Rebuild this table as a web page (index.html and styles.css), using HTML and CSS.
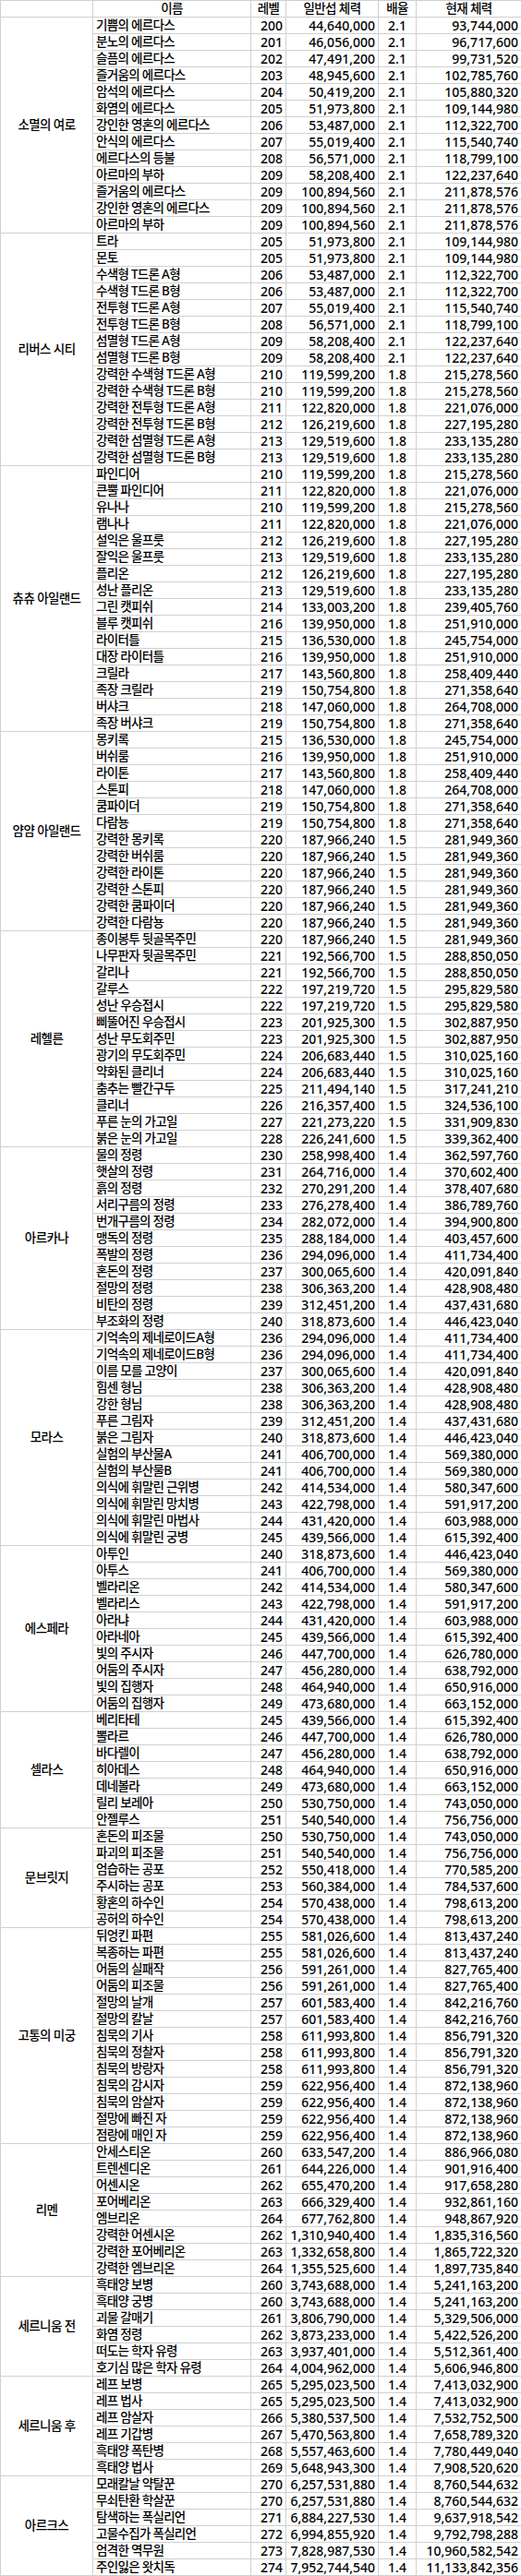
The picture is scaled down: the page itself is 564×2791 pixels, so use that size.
FILE: index.html
```html
<!DOCTYPE html>
<html lang="ko">
<head>
<meta charset="utf-8">
<title>몬스터 체력표</title>
<link rel="stylesheet" href="styles.css">
</head>
<body>
<table class="sheet">
<colgroup>
<col class="c-area"><col class="c-name"><col class="c-lv"><col class="c-hp"><col class="c-mul"><col class="c-cur">
</colgroup>
<thead>
<tr><th></th><th>이름</th><th>레벨</th><th>일반섭 체력</th><th>배율</th><th>현재 체력</th></tr>
</thead>
<tbody>
<tr><td class="area" rowspan="13">소멸의 여로</td><td class="n">기쁨의 에르다스</td><td class="r">200</td><td class="r">44,640,000</td><td class="c">2.1</td><td class="r">93,744,000</td></tr>
<tr><td class="n">분노의 에르다스</td><td class="r">201</td><td class="r">46,056,000</td><td class="c">2.1</td><td class="r">96,717,600</td></tr>
<tr><td class="n">슬픔의 에르다스</td><td class="r">202</td><td class="r">47,491,200</td><td class="c">2.1</td><td class="r">99,731,520</td></tr>
<tr><td class="n">즐거움의 에르다스</td><td class="r">203</td><td class="r">48,945,600</td><td class="c">2.1</td><td class="r">102,785,760</td></tr>
<tr><td class="n">암석의 에르다스</td><td class="r">204</td><td class="r">50,419,200</td><td class="c">2.1</td><td class="r">105,880,320</td></tr>
<tr><td class="n">화염의 에르다스</td><td class="r">205</td><td class="r">51,973,800</td><td class="c">2.1</td><td class="r">109,144,980</td></tr>
<tr><td class="n">강인한 영혼의 에르다스</td><td class="r">206</td><td class="r">53,487,000</td><td class="c">2.1</td><td class="r">112,322,700</td></tr>
<tr><td class="n">안식의 에르다스</td><td class="r">207</td><td class="r">55,019,400</td><td class="c">2.1</td><td class="r">115,540,740</td></tr>
<tr><td class="n">에르다스의 등불</td><td class="r">208</td><td class="r">56,571,000</td><td class="c">2.1</td><td class="r">118,799,100</td></tr>
<tr><td class="n">아르마의 부하</td><td class="r">209</td><td class="r">58,208,400</td><td class="c">2.1</td><td class="r">122,237,640</td></tr>
<tr><td class="n">즐거움의 에르다스</td><td class="r">209</td><td class="r">100,894,560</td><td class="c">2.1</td><td class="r">211,878,576</td></tr>
<tr><td class="n">강인한 영혼의 에르다스</td><td class="r">209</td><td class="r">100,894,560</td><td class="c">2.1</td><td class="r">211,878,576</td></tr>
<tr><td class="n">아르마의 부하</td><td class="r">209</td><td class="r">100,894,560</td><td class="c">2.1</td><td class="r">211,878,576</td></tr>

<tr><td class="area" rowspan="14">리버스 시티</td><td class="n">트라</td><td class="r">205</td><td class="r">51,973,800</td><td class="c">2.1</td><td class="r">109,144,980</td></tr>
<tr><td class="n">몬토</td><td class="r">205</td><td class="r">51,973,800</td><td class="c">2.1</td><td class="r">109,144,980</td></tr>
<tr><td class="n">수색형 T드론 A형</td><td class="r">206</td><td class="r">53,487,000</td><td class="c">2.1</td><td class="r">112,322,700</td></tr>
<tr><td class="n">수색형 T드론 B형</td><td class="r">206</td><td class="r">53,487,000</td><td class="c">2.1</td><td class="r">112,322,700</td></tr>
<tr><td class="n">전투형 T드론 A형</td><td class="r">207</td><td class="r">55,019,400</td><td class="c">2.1</td><td class="r">115,540,740</td></tr>
<tr><td class="n">전투형 T드론 B형</td><td class="r">208</td><td class="r">56,571,000</td><td class="c">2.1</td><td class="r">118,799,100</td></tr>
<tr><td class="n">섬멸형 T드론 A형</td><td class="r">209</td><td class="r">58,208,400</td><td class="c">2.1</td><td class="r">122,237,640</td></tr>
<tr><td class="n">섬멸형 T드론 B형</td><td class="r">209</td><td class="r">58,208,400</td><td class="c">2.1</td><td class="r">122,237,640</td></tr>
<tr><td class="n">강력한 수색형 T드론 A형</td><td class="r">210</td><td class="r">119,599,200</td><td class="c">1.8</td><td class="r">215,278,560</td></tr>
<tr><td class="n">강력한 수색형 T드론 B형</td><td class="r">210</td><td class="r">119,599,200</td><td class="c">1.8</td><td class="r">215,278,560</td></tr>
<tr><td class="n">강력한 전투형 T드론 A형</td><td class="r">211</td><td class="r">122,820,000</td><td class="c">1.8</td><td class="r">221,076,000</td></tr>
<tr><td class="n">강력한 전투형 T드론 B형</td><td class="r">212</td><td class="r">126,219,600</td><td class="c">1.8</td><td class="r">227,195,280</td></tr>
<tr><td class="n">강력한 섬멸형 T드론 A형</td><td class="r">213</td><td class="r">129,519,600</td><td class="c">1.8</td><td class="r">233,135,280</td></tr>
<tr><td class="n">강력한 섬멸형 T드론 B형</td><td class="r">213</td><td class="r">129,519,600</td><td class="c">1.8</td><td class="r">233,135,280</td></tr>

<tr><td class="area" rowspan="16">츄츄 아일랜드</td><td class="n">파인디어</td><td class="r">210</td><td class="r">119,599,200</td><td class="c">1.8</td><td class="r">215,278,560</td></tr>
<tr><td class="n">큰뿔 파인디어</td><td class="r">211</td><td class="r">122,820,000</td><td class="c">1.8</td><td class="r">221,076,000</td></tr>
<tr><td class="n">유나나</td><td class="r">210</td><td class="r">119,599,200</td><td class="c">1.8</td><td class="r">215,278,560</td></tr>
<tr><td class="n">램나나</td><td class="r">211</td><td class="r">122,820,000</td><td class="c">1.8</td><td class="r">221,076,000</td></tr>
<tr><td class="n">설익은 울프룻</td><td class="r">212</td><td class="r">126,219,600</td><td class="c">1.8</td><td class="r">227,195,280</td></tr>
<tr><td class="n">잘익은 울프룻</td><td class="r">213</td><td class="r">129,519,600</td><td class="c">1.8</td><td class="r">233,135,280</td></tr>
<tr><td class="n">플리온</td><td class="r">212</td><td class="r">126,219,600</td><td class="c">1.8</td><td class="r">227,195,280</td></tr>
<tr><td class="n">성난 플리온</td><td class="r">213</td><td class="r">129,519,600</td><td class="c">1.8</td><td class="r">233,135,280</td></tr>
<tr><td class="n">그린 캣피쉬</td><td class="r">214</td><td class="r">133,003,200</td><td class="c">1.8</td><td class="r">239,405,760</td></tr>
<tr><td class="n">블루 캣피쉬</td><td class="r">216</td><td class="r">139,950,000</td><td class="c">1.8</td><td class="r">251,910,000</td></tr>
<tr><td class="n">라이터틀</td><td class="r">215</td><td class="r">136,530,000</td><td class="c">1.8</td><td class="r">245,754,000</td></tr>
<tr><td class="n">대장 라이터틀</td><td class="r">216</td><td class="r">139,950,000</td><td class="c">1.8</td><td class="r">251,910,000</td></tr>
<tr><td class="n">크릴라</td><td class="r">217</td><td class="r">143,560,800</td><td class="c">1.8</td><td class="r">258,409,440</td></tr>
<tr><td class="n">족장 크릴라</td><td class="r">219</td><td class="r">150,754,800</td><td class="c">1.8</td><td class="r">271,358,640</td></tr>
<tr><td class="n">버샤크</td><td class="r">218</td><td class="r">147,060,000</td><td class="c">1.8</td><td class="r">264,708,000</td></tr>
<tr><td class="n">족장 버샤크</td><td class="r">219</td><td class="r">150,754,800</td><td class="c">1.8</td><td class="r">271,358,640</td></tr>

<tr><td class="area" rowspan="12">얌얌 아일랜드</td><td class="n">몽키록</td><td class="r">215</td><td class="r">136,530,000</td><td class="c">1.8</td><td class="r">245,754,000</td></tr>
<tr><td class="n">버쉬룸</td><td class="r">216</td><td class="r">139,950,000</td><td class="c">1.8</td><td class="r">251,910,000</td></tr>
<tr><td class="n">라이톤</td><td class="r">217</td><td class="r">143,560,800</td><td class="c">1.8</td><td class="r">258,409,440</td></tr>
<tr><td class="n">스톤피</td><td class="r">218</td><td class="r">147,060,000</td><td class="c">1.8</td><td class="r">264,708,000</td></tr>
<tr><td class="n">쿰파이더</td><td class="r">219</td><td class="r">150,754,800</td><td class="c">1.8</td><td class="r">271,358,640</td></tr>
<tr><td class="n">다람뇽</td><td class="r">219</td><td class="r">150,754,800</td><td class="c">1.8</td><td class="r">271,358,640</td></tr>
<tr><td class="n">강력한 몽키록</td><td class="r">220</td><td class="r">187,966,240</td><td class="c">1.5</td><td class="r">281,949,360</td></tr>
<tr><td class="n">강력한 버쉬룸</td><td class="r">220</td><td class="r">187,966,240</td><td class="c">1.5</td><td class="r">281,949,360</td></tr>
<tr><td class="n">강력한 라이톤</td><td class="r">220</td><td class="r">187,966,240</td><td class="c">1.5</td><td class="r">281,949,360</td></tr>
<tr><td class="n">강력한 스톤피</td><td class="r">220</td><td class="r">187,966,240</td><td class="c">1.5</td><td class="r">281,949,360</td></tr>
<tr><td class="n">강력한 쿰파이더</td><td class="r">220</td><td class="r">187,966,240</td><td class="c">1.5</td><td class="r">281,949,360</td></tr>
<tr><td class="n">강력한 다람뇽</td><td class="r">220</td><td class="r">187,966,240</td><td class="c">1.5</td><td class="r">281,949,360</td></tr>

<tr><td class="area" rowspan="13">레헬른</td><td class="n">종이봉투 뒷골목주민</td><td class="r">220</td><td class="r">187,966,240</td><td class="c">1.5</td><td class="r">281,949,360</td></tr>
<tr><td class="n">나무판자 뒷골목주민</td><td class="r">221</td><td class="r">192,566,700</td><td class="c">1.5</td><td class="r">288,850,050</td></tr>
<tr><td class="n">갈리나</td><td class="r">221</td><td class="r">192,566,700</td><td class="c">1.5</td><td class="r">288,850,050</td></tr>
<tr><td class="n">갈루스</td><td class="r">222</td><td class="r">197,219,720</td><td class="c">1.5</td><td class="r">295,829,580</td></tr>
<tr><td class="n">성난 우승접시</td><td class="r">222</td><td class="r">197,219,720</td><td class="c">1.5</td><td class="r">295,829,580</td></tr>
<tr><td class="n">삐뚤어진 우승접시</td><td class="r">223</td><td class="r">201,925,300</td><td class="c">1.5</td><td class="r">302,887,950</td></tr>
<tr><td class="n">성난 무도회주민</td><td class="r">223</td><td class="r">201,925,300</td><td class="c">1.5</td><td class="r">302,887,950</td></tr>
<tr><td class="n">광기의 무도회주민</td><td class="r">224</td><td class="r">206,683,440</td><td class="c">1.5</td><td class="r">310,025,160</td></tr>
<tr><td class="n">약화된 클리너</td><td class="r">224</td><td class="r">206,683,440</td><td class="c">1.5</td><td class="r">310,025,160</td></tr>
<tr><td class="n">춤추는 빨간구두</td><td class="r">225</td><td class="r">211,494,140</td><td class="c">1.5</td><td class="r">317,241,210</td></tr>
<tr><td class="n">클리너</td><td class="r">226</td><td class="r">216,357,400</td><td class="c">1.5</td><td class="r">324,536,100</td></tr>
<tr><td class="n">푸른 눈의 가고일</td><td class="r">227</td><td class="r">221,273,220</td><td class="c">1.5</td><td class="r">331,909,830</td></tr>
<tr><td class="n">붉은 눈의 가고일</td><td class="r">228</td><td class="r">226,241,600</td><td class="c">1.5</td><td class="r">339,362,400</td></tr>

<tr><td class="area" rowspan="11">아르카나</td><td class="n">물의 정령</td><td class="r">230</td><td class="r">258,998,400</td><td class="c">1.4</td><td class="r">362,597,760</td></tr>
<tr><td class="n">햇살의 정령</td><td class="r">231</td><td class="r">264,716,000</td><td class="c">1.4</td><td class="r">370,602,400</td></tr>
<tr><td class="n">흙의 정령</td><td class="r">232</td><td class="r">270,291,200</td><td class="c">1.4</td><td class="r">378,407,680</td></tr>
<tr><td class="n">서리구름의 정령</td><td class="r">233</td><td class="r">276,278,400</td><td class="c">1.4</td><td class="r">386,789,760</td></tr>
<tr><td class="n">번개구름의 정령</td><td class="r">234</td><td class="r">282,072,000</td><td class="c">1.4</td><td class="r">394,900,800</td></tr>
<tr><td class="n">맹독의 정령</td><td class="r">235</td><td class="r">288,184,000</td><td class="c">1.4</td><td class="r">403,457,600</td></tr>
<tr><td class="n">폭발의 정령</td><td class="r">236</td><td class="r">294,096,000</td><td class="c">1.4</td><td class="r">411,734,400</td></tr>
<tr><td class="n">혼돈의 정령</td><td class="r">237</td><td class="r">300,065,600</td><td class="c">1.4</td><td class="r">420,091,840</td></tr>
<tr><td class="n">절망의 정령</td><td class="r">238</td><td class="r">306,363,200</td><td class="c">1.4</td><td class="r">428,908,480</td></tr>
<tr><td class="n">비탄의 정령</td><td class="r">239</td><td class="r">312,451,200</td><td class="c">1.4</td><td class="r">437,431,680</td></tr>
<tr><td class="n">부조화의 정령</td><td class="r">240</td><td class="r">318,873,600</td><td class="c">1.4</td><td class="r">446,423,040</td></tr>

<tr><td class="area" rowspan="13">모라스</td><td class="n">기억속의 제네로이드A형</td><td class="r">236</td><td class="r">294,096,000</td><td class="c">1.4</td><td class="r">411,734,400</td></tr>
<tr><td class="n">기억속의 제네로이드B형</td><td class="r">236</td><td class="r">294,096,000</td><td class="c">1.4</td><td class="r">411,734,400</td></tr>
<tr><td class="n">이름 모를 고양이</td><td class="r">237</td><td class="r">300,065,600</td><td class="c">1.4</td><td class="r">420,091,840</td></tr>
<tr><td class="n">힘센 형님</td><td class="r">238</td><td class="r">306,363,200</td><td class="c">1.4</td><td class="r">428,908,480</td></tr>
<tr><td class="n">강한 형님</td><td class="r">238</td><td class="r">306,363,200</td><td class="c">1.4</td><td class="r">428,908,480</td></tr>
<tr><td class="n">푸른 그림자</td><td class="r">239</td><td class="r">312,451,200</td><td class="c">1.4</td><td class="r">437,431,680</td></tr>
<tr><td class="n">붉은 그림자</td><td class="r">240</td><td class="r">318,873,600</td><td class="c">1.4</td><td class="r">446,423,040</td></tr>
<tr><td class="n">실험의 부산물A</td><td class="r">241</td><td class="r">406,700,000</td><td class="c">1.4</td><td class="r">569,380,000</td></tr>
<tr><td class="n">실험의 부산물B</td><td class="r">241</td><td class="r">406,700,000</td><td class="c">1.4</td><td class="r">569,380,000</td></tr>
<tr><td class="n">의식에 휘말린 근위병</td><td class="r">242</td><td class="r">414,534,000</td><td class="c">1.4</td><td class="r">580,347,600</td></tr>
<tr><td class="n">의식에 휘말린 망치병</td><td class="r">243</td><td class="r">422,798,000</td><td class="c">1.4</td><td class="r">591,917,200</td></tr>
<tr><td class="n">의식에 휘말린 마법사</td><td class="r">244</td><td class="r">431,420,000</td><td class="c">1.4</td><td class="r">603,988,000</td></tr>
<tr><td class="n">의식에 휘말린 궁병</td><td class="r">245</td><td class="r">439,566,000</td><td class="c">1.4</td><td class="r">615,392,400</td></tr>

<tr><td class="area" rowspan="10">에스페라</td><td class="n">아투인</td><td class="r">240</td><td class="r">318,873,600</td><td class="c">1.4</td><td class="r">446,423,040</td></tr>
<tr><td class="n">아투스</td><td class="r">241</td><td class="r">406,700,000</td><td class="c">1.4</td><td class="r">569,380,000</td></tr>
<tr><td class="n">벨라리온</td><td class="r">242</td><td class="r">414,534,000</td><td class="c">1.4</td><td class="r">580,347,600</td></tr>
<tr><td class="n">벨라리스</td><td class="r">243</td><td class="r">422,798,000</td><td class="c">1.4</td><td class="r">591,917,200</td></tr>
<tr><td class="n">아라냐</td><td class="r">244</td><td class="r">431,420,000</td><td class="c">1.4</td><td class="r">603,988,000</td></tr>
<tr><td class="n">아라네아</td><td class="r">245</td><td class="r">439,566,000</td><td class="c">1.4</td><td class="r">615,392,400</td></tr>
<tr><td class="n">빛의 주시자</td><td class="r">246</td><td class="r">447,700,000</td><td class="c">1.4</td><td class="r">626,780,000</td></tr>
<tr><td class="n">어둠의 주시자</td><td class="r">247</td><td class="r">456,280,000</td><td class="c">1.4</td><td class="r">638,792,000</td></tr>
<tr><td class="n">빛의 집행자</td><td class="r">248</td><td class="r">464,940,000</td><td class="c">1.4</td><td class="r">650,916,000</td></tr>
<tr><td class="n">어둠의 집행자</td><td class="r">249</td><td class="r">473,680,000</td><td class="c">1.4</td><td class="r">663,152,000</td></tr>

<tr><td class="area" rowspan="7">셀라스</td><td class="n">베리타테</td><td class="r">245</td><td class="r">439,566,000</td><td class="c">1.4</td><td class="r">615,392,400</td></tr>
<tr><td class="n">뽈라르</td><td class="r">246</td><td class="r">447,700,000</td><td class="c">1.4</td><td class="r">626,780,000</td></tr>
<tr><td class="n">바다렐이</td><td class="r">247</td><td class="r">456,280,000</td><td class="c">1.4</td><td class="r">638,792,000</td></tr>
<tr><td class="n">히아데스</td><td class="r">248</td><td class="r">464,940,000</td><td class="c">1.4</td><td class="r">650,916,000</td></tr>
<tr><td class="n">데네볼라</td><td class="r">249</td><td class="r">473,680,000</td><td class="c">1.4</td><td class="r">663,152,000</td></tr>
<tr><td class="n">릴리 보레아</td><td class="r">250</td><td class="r">530,750,000</td><td class="c">1.4</td><td class="r">743,050,000</td></tr>
<tr><td class="n">안젤루스</td><td class="r">251</td><td class="r">540,540,000</td><td class="c">1.4</td><td class="r">756,756,000</td></tr>

<tr><td class="area" rowspan="6">문브릿지</td><td class="n">혼돈의 피조물</td><td class="r">250</td><td class="r">530,750,000</td><td class="c">1.4</td><td class="r">743,050,000</td></tr>
<tr><td class="n">파괴의 피조물</td><td class="r">251</td><td class="r">540,540,000</td><td class="c">1.4</td><td class="r">756,756,000</td></tr>
<tr><td class="n">엄습하는 공포</td><td class="r">252</td><td class="r">550,418,000</td><td class="c">1.4</td><td class="r">770,585,200</td></tr>
<tr><td class="n">주시하는 공포</td><td class="r">253</td><td class="r">560,384,000</td><td class="c">1.4</td><td class="r">784,537,600</td></tr>
<tr><td class="n">황혼의 하수인</td><td class="r">254</td><td class="r">570,438,000</td><td class="c">1.4</td><td class="r">798,613,200</td></tr>
<tr><td class="n">공허의 하수인</td><td class="r">254</td><td class="r">570,438,000</td><td class="c">1.4</td><td class="r">798,613,200</td></tr>

<tr><td class="area" rowspan="13">고통의 미궁</td><td class="n">뒤엉킨 파편</td><td class="r">255</td><td class="r">581,026,600</td><td class="c">1.4</td><td class="r">813,437,240</td></tr>
<tr><td class="n">복종하는 파편</td><td class="r">255</td><td class="r">581,026,600</td><td class="c">1.4</td><td class="r">813,437,240</td></tr>
<tr><td class="n">어둠의 실패작</td><td class="r">256</td><td class="r">591,261,000</td><td class="c">1.4</td><td class="r">827,765,400</td></tr>
<tr><td class="n">어둠의 피조물</td><td class="r">256</td><td class="r">591,261,000</td><td class="c">1.4</td><td class="r">827,765,400</td></tr>
<tr><td class="n">절망의 날개</td><td class="r">257</td><td class="r">601,583,400</td><td class="c">1.4</td><td class="r">842,216,760</td></tr>
<tr><td class="n">절망의 칼날</td><td class="r">257</td><td class="r">601,583,400</td><td class="c">1.4</td><td class="r">842,216,760</td></tr>
<tr><td class="n">침묵의 기사</td><td class="r">258</td><td class="r">611,993,800</td><td class="c">1.4</td><td class="r">856,791,320</td></tr>
<tr><td class="n">침묵의 정찰자</td><td class="r">258</td><td class="r">611,993,800</td><td class="c">1.4</td><td class="r">856,791,320</td></tr>
<tr><td class="n">침묵의 방랑자</td><td class="r">258</td><td class="r">611,993,800</td><td class="c">1.4</td><td class="r">856,791,320</td></tr>
<tr><td class="n">침묵의 감시자</td><td class="r">259</td><td class="r">622,956,400</td><td class="c">1.4</td><td class="r">872,138,960</td></tr>
<tr><td class="n">침묵의 암살자</td><td class="r">259</td><td class="r">622,956,400</td><td class="c">1.4</td><td class="r">872,138,960</td></tr>
<tr><td class="n">절망에 빠진 자</td><td class="r">259</td><td class="r">622,956,400</td><td class="c">1.4</td><td class="r">872,138,960</td></tr>
<tr><td class="n">점랑에 매인 자</td><td class="r">259</td><td class="r">622,956,400</td><td class="c">1.4</td><td class="r">872,138,960</td></tr>

<tr><td class="area" rowspan="8">리멘</td><td class="n">안세스티온</td><td class="r">260</td><td class="r">633,547,200</td><td class="c">1.4</td><td class="r">886,966,080</td></tr>
<tr><td class="n">트렌센디온</td><td class="r">261</td><td class="r">644,226,000</td><td class="c">1.4</td><td class="r">901,916,400</td></tr>
<tr><td class="n">어센시온</td><td class="r">262</td><td class="r">655,470,200</td><td class="c">1.4</td><td class="r">917,658,280</td></tr>
<tr><td class="n">포어베리온</td><td class="r">263</td><td class="r">666,329,400</td><td class="c">1.4</td><td class="r">932,861,160</td></tr>
<tr><td class="n">엠브리온</td><td class="r">264</td><td class="r">677,762,800</td><td class="c">1.4</td><td class="r">948,867,920</td></tr>
<tr><td class="n">강력한 어센시온</td><td class="r">262</td><td class="r">1,310,940,400</td><td class="c">1.4</td><td class="r">1,835,316,560</td></tr>
<tr><td class="n">강력한 포어베리온</td><td class="r">263</td><td class="r">1,332,658,800</td><td class="c">1.4</td><td class="r">1,865,722,320</td></tr>
<tr><td class="n">강력한 엠브리온</td><td class="r">264</td><td class="r">1,355,525,600</td><td class="c">1.4</td><td class="r">1,897,735,840</td></tr>

<tr><td class="area" rowspan="6">세르니움 전</td><td class="n">흑태양 보병</td><td class="r">260</td><td class="r">3,743,688,000</td><td class="c">1.4</td><td class="r">5,241,163,200</td></tr>
<tr><td class="n">흑태양 궁병</td><td class="r">260</td><td class="r">3,743,688,000</td><td class="c">1.4</td><td class="r">5,241,163,200</td></tr>
<tr><td class="n">괴물 갈매기</td><td class="r">261</td><td class="r">3,806,790,000</td><td class="c">1.4</td><td class="r">5,329,506,000</td></tr>
<tr><td class="n">화염 정령</td><td class="r">262</td><td class="r">3,873,233,000</td><td class="c">1.4</td><td class="r">5,422,526,200</td></tr>
<tr><td class="n">떠도는 학자 유령</td><td class="r">263</td><td class="r">3,937,401,000</td><td class="c">1.4</td><td class="r">5,512,361,400</td></tr>
<tr><td class="n">호기심 많은 학자 유령</td><td class="r">264</td><td class="r">4,004,962,000</td><td class="c">1.4</td><td class="r">5,606,946,800</td></tr>

<tr><td class="area" rowspan="6">세르니움 후</td><td class="n">레프 보병</td><td class="r">265</td><td class="r">5,295,023,500</td><td class="c">1.4</td><td class="r">7,413,032,900</td></tr>
<tr><td class="n">레프 법사</td><td class="r">265</td><td class="r">5,295,023,500</td><td class="c">1.4</td><td class="r">7,413,032,900</td></tr>
<tr><td class="n">레프 암살자</td><td class="r">266</td><td class="r">5,380,537,500</td><td class="c">1.4</td><td class="r">7,532,752,500</td></tr>
<tr><td class="n">레프 기갑병</td><td class="r">267</td><td class="r">5,470,563,800</td><td class="c">1.4</td><td class="r">7,658,789,320</td></tr>
<tr><td class="n">흑태양 폭탄병</td><td class="r">268</td><td class="r">5,557,463,600</td><td class="c">1.4</td><td class="r">7,780,449,040</td></tr>
<tr><td class="n">흑태양 법사</td><td class="r">269</td><td class="r">5,648,943,300</td><td class="c">1.4</td><td class="r">7,908,520,620</td></tr>

<tr><td class="area" rowspan="6">아르크스</td><td class="n">모래칼날 약탈꾼</td><td class="r">270</td><td class="r">6,257,531,880</td><td class="c">1.4</td><td class="r">8,760,544,632</td></tr>
<tr><td class="n">무쇠탄환 학살꾼</td><td class="r">270</td><td class="r">6,257,531,880</td><td class="c">1.4</td><td class="r">8,760,544,632</td></tr>
<tr><td class="n">탐색하는 폭실리언</td><td class="r">271</td><td class="r">6,884,227,530</td><td class="c">1.4</td><td class="r">9,637,918,542</td></tr>
<tr><td class="n">고물수집가 폭실리언</td><td class="r">272</td><td class="r">6,994,855,920</td><td class="c">1.4</td><td class="r">9,792,798,288</td></tr>
<tr><td class="n">엄격한 역무원</td><td class="r">273</td><td class="r">7,828,987,530</td><td class="c">1.4</td><td class="r">10,960,582,542</td></tr>
<tr><td class="n">주인잃은 왓치독</td><td class="r">274</td><td class="r">7,952,744,540</td><td class="c">1.4</td><td class="r">11,133,842,356</td></tr>
</tbody>
</table>
</body>
</html>
```

FILE: styles.css
```css
html, body {
  margin: 0;
  padding: 0;
  background: #ffffff;
}

.sheet {
  border-collapse: collapse;
  table-layout: fixed;
  width: 564px;
  font-family: "Noto Sans", "Noto Sans CJK KR", sans-serif;
  font-size: 14px;
  color: #000000;
}

.c-area { width: 100px; }
.c-name { width: 171px; }
.c-lv { width: 38px; }
.c-hp { width: 100px; }
.c-mul { width: 41px; }
.c-cur { width: 114px; }

.sheet th,
.sheet td {
  border: 1px solid #d0d0d0;
  height: 17px;
  padding: 0 3px;
  line-height: 17px;
  white-space: nowrap;
  overflow: hidden;
  font-weight: 500;
  box-sizing: border-box;
}

.sheet th {
  text-align: center;
  font-size: 13.5px;
  letter-spacing: -0.6px;
}

.sheet .area {
  text-align: center;
  vertical-align: middle;
  font-size: 13.5px;
  letter-spacing: -0.6px;
}

.sheet .n {
  text-align: left;
  font-size: 13.5px;
  letter-spacing: -0.7px;
}

.sheet .r { text-align: right; padding-right: 3px; }
.sheet .c { text-align: center; }
```
